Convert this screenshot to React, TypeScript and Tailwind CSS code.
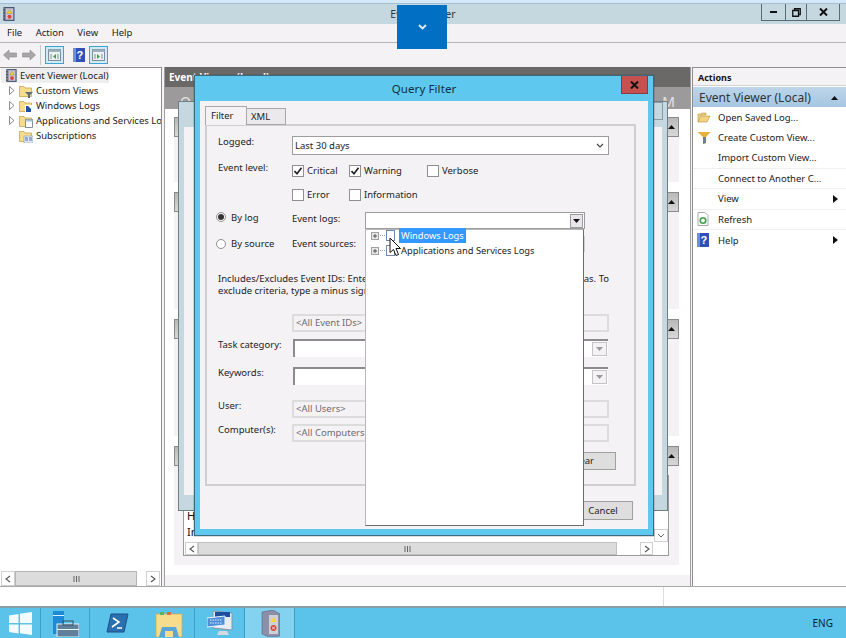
import React from "react";

const EvIcon = ({ s = 14 }: { s?: number }) => (
  <svg width={s} height={s} viewBox="0 0 14 14" className="shrink-0">
    <rect x="2" y="0.5" width="10" height="13" fill="#8a8fa8" stroke="#4d5878" />
    <rect x="4" y="1.5" width="7" height="11" fill="#c9c4cf" />
    <path d="M7.5 2.5 L10 6.5 H5 Z" fill="#f5d33a" stroke="#a08010" strokeWidth="0.4" />
    <circle cx="7.5" cy="9.8" r="2" fill="#d8403a" />
    <path d="M1 3h2M1 6h2M1 9h2M1 12h2" stroke="#333" strokeWidth="0.8" />
  </svg>
);

const Folder = ({ kind }: { kind: "filter" | "logs" | "apps" | "subs" }) => (
  <svg width="14" height="14" viewBox="0 0 14 14" className="shrink-0">
    <path d="M0.5 2.5 H5 L6 4 H12.5 V12.5 H0.5 Z" fill="#f6dc8c" stroke="#c7a650" strokeWidth="0.8" />
    {kind === "filter" && <path d="M6 8h8l-3 3v3h-2v-3z" fill="#5b6d7c" />}
    {kind === "logs" && (
      <>
        <rect x="6" y="6" width="8" height="8" fill="#fff" />
        <path d="M7 7h2l3 3v3H7z" fill="#1f4ea8" />
      </>
    )}
    {kind === "apps" && (
      <>
        <rect x="6.5" y="5.5" width="7" height="8" fill="#fff" stroke="#6c7480" strokeWidth="0.8" />
        <rect x="6.5" y="5.5" width="7" height="2" fill="#a9bfd3" />
      </>
    )}
    {kind === "subs" && (
      <>
        <rect x="5" y="7" width="9" height="7" fill="#e5e9f3" stroke="#8a9ab8" strokeWidth="0.6" />
        <path d="M6 9h3M10 9h3M6 11h3M10 11h3" stroke="#4d6ca8" strokeWidth="1" />
      </>
    )}
  </svg>
);

const TreeArrow = () => (
  <svg width="6" height="9" viewBox="0 0 6 9" className="shrink-0">
    <path d="M0.5 0.5 L5 4.5 L0.5 8.5 Z" fill="#fff" stroke="#6e6e6e" strokeWidth="0.8" />
  </svg>
);

const PaneIcon = ({ right }: { right?: boolean }) => (
  <div className="w-[19px] h-[18px] border border-[#3fa5d0] bg-[#cfeaf8] flex items-center justify-center">
    <svg width="13" height="12" viewBox="0 0 13 12">
      <rect x="0.5" y="0.5" width="12" height="11" fill="#eef1f3" stroke="#7a8d99" />
      <rect x="0.5" y="0.5" width="12" height="2.5" fill="#9fb1bd" />
      <path d={right ? "M5 5 L8 7.5 L5 10 Z" : "M8 5 L5 7.5 L8 10 Z"} fill="#43a047" />
      <path d="M3 5v5M10 5v5" stroke="#7a8d99" />
    </svg>
  </div>
);

const HelpIcon = () => (
  <svg width="12" height="14" viewBox="0 0 12 14" className="shrink-0">
    <rect width="12" height="14" fill="#2f52b8" />
    <rect x="0" y="0" width="3" height="14" fill="#6f8fdc" />
    <text x="6.8" y="11" fontSize="11" fontWeight="700" fill="#fff" textAnchor="middle" fontFamily="Liberation Sans">?</text>
  </svg>
);

const NavArrow = ({ left }: { left?: boolean }) => (
  <svg width="14" height="12" viewBox="0 0 14 12">
    <path d={left ? "M0.5 6 L6 1 V4 H13.5 V8 H6 V11 Z" : "M13.5 6 L8 1 V4 H0.5 V8 H8 V11 Z"} fill="#a7a7a7" stroke="#8a8a8a" strokeWidth="0.6" />
  </svg>
);

const TreeRow = ({ kind, label, arrow = true }: { kind: "filter" | "logs" | "apps" | "subs"; label: string; arrow?: boolean }) => (
  <div className="h-[15px] flex items-center pl-[9px] whitespace-nowrap">
    <div className="w-[10px] shrink-0">{arrow && <TreeArrow />}</div>
    <Folder kind={kind} />
    <span className="ml-[3px]">{label}</span>
  </div>
);

const ScrollBtn = ({ right, w = "w-[14px]" }: { right?: boolean; w?: string }) => (
  <div className={`${w} h-full flex items-center justify-center bg-white border border-[#d0d0d0] shrink-0`}>
    <svg width="6" height="8" viewBox="0 0 6 8">
      <path d={right ? "M1 1l4 3-4 3" : "M5 1L1 4l4 3"} fill="none" stroke="#555" strokeWidth="1.1" />
    </svg>
  </div>
);

const Grip = () => (
  <svg width="7" height="6" viewBox="0 0 7 6">
    <path d="M1 0v6M3.5 0v6M6 0v6" stroke="#666" strokeWidth="1" />
  </svg>
);

const SectionBtn = ({ gap = "mt-[10px]", h }: { gap?: string; h: string }) => (
  <div className={`${gap} ${h} bg-[#f5f2f6] flex flex-col`}>
    <div className="h-[20px] shrink-0 bg-gradient-to-b from-[#b8b8b8] to-[#d8d8d8] border border-[#8a8a8a] flex items-center justify-end pr-[3px]">
      <svg width="7" height="4" viewBox="0 0 7 4"><path d="M3.5 0L7 4H0z" fill="#111" /></svg>
    </div>
  </div>
);

const Check = ({ on }: { on?: boolean }) => (
  <div className="w-[12px] h-[12px] border border-[#8f8f8f] bg-white shrink-0 flex items-center justify-center">
    {on && (
      <svg width="10" height="10" viewBox="0 0 10 10">
        <path d="M1.5 5.2 L4 7.8 L8.5 1.8" fill="none" stroke="#222" strokeWidth="1.7" />
      </svg>
    )}
  </div>
);

const CheckLabel = ({ on, label, w }: { on?: boolean; label: string; w: string }) => (
  <div className={`flex items-center ${w}`}>
    <Check on={on} />
    <span className="ml-[3px]">{label}</span>
  </div>
);

const Radio = ({ on }: { on?: boolean }) => (
  <div className="w-[10px] h-[10px] rounded-full border border-[#8f8f8f] bg-white flex items-center justify-center shrink-0">
    {on && <div className="w-[6px] h-[6px] rounded-full bg-[#333]" />}
  </div>
);

const GrayInput = ({ text, cls }: { text: string; cls: string }) => (
  <div className={`${cls} flex items-center`}>
    <div className="w-[74px] shrink-0" />
    <div className="w-[317px] h-[18px] border-2 border-[#dcdcdc] pl-[2px] flex items-center text-[#6d6d6d] leading-none">{text}</div>
  </div>
);

const LabeledGray = ({ label, text, cls }: { label: string; text: string; cls: string }) => (
  <div className={`${cls} flex items-center`}>
    <div className="w-[74px] shrink-0 mb-[6px]">{label}</div>
    <div className="w-[317px] h-[18px] border-2 border-[#dcdcdc] pl-[2px] flex items-center text-[#6d6d6d] leading-none">{text}</div>
  </div>
);

const DisabledCombo = ({ label, cls }: { label: string; cls: string }) => (
  <div className={`${cls} flex items-start`}>
    <div className="w-[75px] shrink-0 mt-[1px]">{label}</div>
    <div className="w-[315px] h-[18px] bg-white border-t-2 border-l-2 border-[#8b8b8b] flex justify-end items-center pr-[1px]">
      <div className="w-[15px] h-[14px] border border-[#c4c4c4] bg-[#f5f2f6] flex items-center justify-center">
        <svg width="7" height="4" viewBox="0 0 7 4"><path d="M0 0h7L3.5 4z" fill="#9a9a9a" /></svg>
      </div>
    </div>
  </div>
);

const ActionRow = ({ icon, label, arrow, line = true }: { icon?: React.ReactNode; label: string; arrow?: boolean; line?: boolean }) => (
  <div className={`h-[20.5px] flex items-center ${line ? "border-b border-[#f0eef2]" : ""}`}>
    <div className="w-[25px] pl-[4px] flex items-center shrink-0">{icon}</div>
    <span className="whitespace-nowrap">{label}</span>
    {arrow && (
      <svg width="5" height="8" viewBox="0 0 5 8" className="ml-auto mr-[8px]"><path d="M0 0l5 4-5 4z" fill="#111" /></svg>
    )}
  </div>
);

const TaskTile = ({ w, sep = true, active, children }: { w: string; sep?: boolean; active?: boolean; children: React.ReactNode }) => (
  <div className={`${w} h-full flex items-center justify-center ${sep ? "border-r border-[#3a9fc4]" : ""} ${active ? "bg-[#82d2f0]" : ""}`}>{children}</div>
);

const PlusBox = () => (
  <div className="w-[8px] h-[8px] border border-[#a0a0a0] bg-[#e8e8e8] shrink-0 flex items-center justify-center">
    <svg width="6" height="6" viewBox="0 0 6 6"><path d="M3 1v4M1 3h4" stroke="#555" strokeWidth="1" /></svg>
  </div>
);

export default function App() {
  return (
    <div className="relative w-[846px] h-[638px] overflow-hidden bg-[#f5f2f6] font-['Noto_Sans',sans-serif] text-[9.5px] text-[#222] leading-none flex flex-col">
      {/* Title bar */}
      <div className="h-[4px] bg-[#d3e8f8] border-b border-[#a3bdd3] shrink-0" />
      <div className="h-[20px] bg-[#c5d8e0] shrink-0 flex items-center relative">
        <div className="pl-[2px]"><EvIcon s={14} /></div>
        <div className="absolute left-0 right-0 text-center text-[10.5px] text-[#333] tracking-[0.2px]">Event Viewer</div>
        <div className="ml-auto mr-[6px] flex h-[17px] self-start items-center">
          <div className="w-[24px] h-full border-l border-b border-[#5c6a72] flex items-center justify-center">
            <div className="w-[7px] h-[2px] bg-[#111]" />
          </div>
          <div className="w-[21px] h-full border-l border-b border-[#5c6a72] flex items-center justify-center">
            <svg width="9" height="9" viewBox="0 0 9 9"><path d="M2.5 2V.75h5.75v5.75H7M.75 2.5H6.5v5.75H.75z" fill="none" stroke="#111" strokeWidth="1.3" /></svg>
          </div>
          <div className="w-[34px] h-full border-l border-b border-r border-[#5c6a72] flex items-center justify-center">
            <svg width="9" height="8" viewBox="0 0 9 8"><path d="M1 .5l7 7M8 .5l-7 7" stroke="#111" strokeWidth="2" /></svg>
          </div>
        </div>
      </div>

      {/* Menu */}
      <div className="h-[19px] shrink-0 border-b border-[#b4b4b4] flex items-center pl-[7px] gap-[13.5px] text-[9.5px]">
        <span>File</span><span>Action</span><span>View</span><span>Help</span>
      </div>

      {/* Toolbar */}
      <div className="h-[24px] shrink-0 flex items-center pl-[3px]">
        <NavArrow left />
        <div className="w-[5px]" />
        <NavArrow />
        <div className="w-px h-[20px] bg-[#c8c8c8] ml-[4px] mr-[4px]" />
        <PaneIcon />
        <div className="w-[9px]" />
        <HelpIcon />
        <div className="w-[4px]" />
        <PaneIcon right />
      </div>

      {/* Main */}
      <div className="h-[520px] shrink-0 flex border-b border-[#a9a9a9]">
        {/* Left tree */}
        <div className="w-[162px] shrink-0 bg-white border-r border-t border-[#8e8e8e] flex flex-col overflow-hidden">
          <div className="h-[15px] mx-[1px] pl-[4px] flex items-center bg-[#eeeeee] w-[108px] shrink-0">
            <EvIcon s={13} />
            <span className="ml-[2px] whitespace-nowrap">Event Viewer (Local)</span>
          </div>
          <TreeRow kind="filter" label="Custom Views" />
          <TreeRow kind="logs" label="Windows Logs" />
          <TreeRow kind="apps" label="Applications and Services Logs" />
          <TreeRow kind="subs" label="Subscriptions" arrow={false} />
          <div className="mt-auto h-[15px] mx-[1px] flex">
            <ScrollBtn />
            <div className="w-[122px] bg-[#dcdcdc] border border-[#b4b4b4] flex items-center justify-center"><Grip /></div>
            <div className="flex-1 bg-white" />
            <ScrollBtn right />
          </div>
        </div>

        {/* Center */}
        <div className="w-[527px] ml-[2px] shrink-0 border-l border-r border-[#a0a0a0] bg-white flex flex-col overflow-hidden">
          <div className="h-[20px] shrink-0 bg-[#6b6868] text-white font-bold text-[10px] pl-[4px] flex items-center whitespace-nowrap">Event Viewer (Local)</div>
          <div className="h-[22px] shrink-0 bg-[#9d9a9b] text-[#e4e4e4] text-[14px] pl-[15px] pr-[15px] pt-[7px] flex items-center justify-between">
            <span>O</span><span>M</span>
          </div>
          <div className="pl-[9px] pr-[11px] flex flex-col flex-1">
            <SectionBtn gap="mt-[8px]" h="h-[65px]" />
            <SectionBtn h="h-[117px]" />
            <SectionBtn h="h-[117px]" />
            <div className="mt-[10px] h-[119px] bg-[#f5f2f6] flex flex-col">
              <div className="h-[20px] shrink-0 bg-gradient-to-b from-[#b8b8b8] to-[#d8d8d8] border border-[#8a8a8a] flex items-center justify-end pr-[3px]">
                <svg width="7" height="4" viewBox="0 0 7 4"><path d="M3.5 0L7 4H0z" fill="#111" /></svg>
              </div>
              <div className="mt-[9px] ml-[9px] w-[486px] h-[81px] border border-[#9a9a9a] bg-white flex flex-col">
                <div className="flex-1 flex">
                  <div className="flex-1 pl-[3px] pt-[34px] text-[11px] text-[#111] flex flex-col gap-[5px]">
                    <span>H</span><span>In</span>
                  </div>
                  <div className="w-[14px] flex flex-col justify-end">
                    <div className="h-[13px] border border-[#d0d0d0] flex items-center justify-center">
                      <svg width="8" height="5" viewBox="0 0 8 5"><path d="M1 1l3 3 3-3" fill="none" stroke="#666" /></svg>
                    </div>
                  </div>
                </div>
                <div className="h-[13px] flex mr-[15px] ml-[1px]">
                  <ScrollBtn w="w-[13px]" />
                  <div className="w-[419px] bg-[#dcdcdc] border border-[#c0c0c0] flex items-center justify-center"><Grip /></div>
                  <div className="flex-1 bg-white" />
                  <ScrollBtn right w="w-[13px]" />
                </div>
              </div>
            </div>
            <div className="mt-[10px] flex-1 bg-[#f5f2f6] -ml-[9px] -mr-[11px]" />
          </div>
        </div>

        {/* Right */}
        <div className="ml-[1px] flex-1 border-l border-t border-[#8e8e8e] bg-white flex flex-col overflow-hidden">
          <div className="h-[18px] shrink-0 bg-[#f5f2f6] border-b border-[#d4d4d4] pl-[5px] pt-[1px] flex items-center font-bold text-[9px] text-[#111]">Actions</div>
          <div className="h-[20px] mt-px shrink-0 bg-gradient-to-b from-[#bdd5ea] to-[#a6c6e2] pl-[6px] pr-[8px] pt-[2px] flex items-center justify-between text-[12px] text-[#333]">
            <span className="whitespace-nowrap">Event Viewer (Local)</span>
            <svg width="7" height="4" viewBox="0 0 7 4"><path d="M3.5 0L7 4H0z" fill="#111" /></svg>
          </div>
          <div className="flex flex-col">
            <ActionRow label="Open Saved Log..." line={false} icon={
              <svg width="14" height="12" viewBox="0 0 14 12"><path d="M1 11V3h3l1-1h4v2H4L1 11h9l3-6H4" fill="#f3d27f" stroke="#b8923c" strokeWidth="0.6" /></svg>
            } />
            <ActionRow label="Create Custom View..." line={false} icon={
              <svg width="14" height="13" viewBox="0 0 14 13"><path d="M0.5 1h13L9 6v6l-3 1V6z" fill="#e8b23a" /><path d="M6 6h3v6l-3 1z" fill="#6d7f90" /></svg>
            } />
            <ActionRow label="Import Custom View..." />
            <ActionRow label="Connect to Another C..." />
            <ActionRow label="View" arrow />
            <ActionRow label="Refresh" icon={
              <svg width="12" height="14" viewBox="0 0 12 14"><path d="M1 .5h7l3 3v10H1z" fill="#fff" stroke="#a8a8a8" /><circle cx="6" cy="8.5" r="2.8" fill="none" stroke="#3ea04a" strokeWidth="1.6" /></svg>
            } />
            <ActionRow label="Help" arrow line={false} icon={<HelpIcon />} />
          </div>
        </div>
      </div>

      {/* Status bar */}
      <div className="h-[19px] shrink-0 bg-white flex justify-end">
        <div className="w-[183px] border-l border-[#dcdcdc]" />
      </div>

      {/* Taskbar */}
      <div className="flex-1 bg-[#5bc3e9] border-t-2 border-[#8b9da6] flex items-center">
        <TaskTile w="w-[41px]">
          <svg width="23" height="23" viewBox="0 0 23 23"><path d="M0 3.5 L9.5 2 V11 H0 Z M11 1.8 L23 0 V11 H11 Z M0 12.5 H9.5 V21.5 L0 20 Z M11 12.5 H23 V23 L11 21.2 Z" fill="#f4fbff" /></svg>
        </TaskTile>
        <TaskTile w="w-[49px]">
          <svg width="27" height="27" viewBox="0 0 27 27"><rect x="1" y="1" width="11" height="23" fill="#1d8ad6" /><rect x="1" y="5" width="11" height="1" fill="#d9f1ff" /><rect x="5" y="14" width="22" height="13" fill="#5f7f9b" stroke="#e8f6ff" /><rect x="11" y="11" width="10" height="4" fill="none" stroke="#3d4f60" /><rect x="5" y="19" width="22" height="1" fill="#e8f6ff" /></svg>
        </TaskTile>
        <TaskTile w="w-[54px]" sep={false}>
          <svg width="23" height="20" viewBox="0 0 23 20"><path d="M5 1 H22 L18 19 H1 Z" fill="#2a6fb0" stroke="#1d4f86" /><path d="M7 5 L13 9 L6 14 M11 15h5" fill="none" stroke="#fff" strokeWidth="1.6" /></svg>
        </TaskTile>
        <TaskTile w="w-[51px]">
          <svg width="27" height="27" viewBox="0 0 27 27"><path d="M0 4 H26 V27 H0 Z" fill="#f6dc8c" stroke="#c8a65a" strokeWidth="0.7" /><rect x="4" y="2" width="4" height="3" fill="#5fb060" /><rect x="11" y="2" width="4" height="3" fill="#d9703c" /><path d="M6 17 H20 L23 27 H3 Z" fill="#5aa6d8" /><rect x="9" y="21" width="8" height="6" fill="#f6dc8c" /></svg>
        </TaskTile>
        <TaskTile w="w-[50px]">
          <svg width="26" height="27" viewBox="0 0 26 27"><path d="M6 1 L25 3 V20 L6 18 Z" fill="#e8edf3" stroke="#8894a3" /><rect x="8" y="2" width="15" height="5" fill="#1d4e9e" /><path d="M0 8 L18 6 V15 L0 17 Z" fill="#4f8ed6" stroke="#e8f4ff" /><path d="M3 10h12M3 13h12" stroke="#dfefff" strokeDasharray="1.5 1" /><path d="M12 21 H20 L22 25 H10 Z" fill="#d5d9de" /></svg>
        </TaskTile>
        <TaskTile w="w-[50px]" active>
          <svg width="20" height="27" viewBox="0 0 20 27"><path d="M2 2 L13 0 L20 4 V26 L9 27 L2 24 Z" fill="#8b90a8" stroke="#5d6785" strokeWidth="0.6" /><path d="M9 5 H18 V24 H9 Z" fill="#cfd0d8" /><path d="M13.5 7 L16.5 12 H10.5 Z" fill="#f5d33a" /><circle cx="13.5" cy="18" r="3" fill="#d8403a" /><path d="M11.8 16.5l3.4 3M15.2 16.5l-3.4 3" stroke="#fff" strokeWidth="0.7" /></svg>
        </TaskTile>
        <span className="ml-auto mr-[13px] text-[10px] text-[#123]">ENG</span>
      </div>

      {/* Blue overlay tab */}
      <div className="absolute left-[397px] top-[5px] w-[50px] h-[44px] bg-[#0170c4] flex items-center justify-center">
        <svg width="9" height="6" viewBox="0 0 9 6"><path d="M1 1l3.5 3.5L8 1" fill="none" stroke="#dff0fb" strokeWidth="1.8" /></svg>
      </div>

      {/* Background dialog */}
      <div className="absolute left-[178px] top-[101px] w-[490px] h-[410px] bg-[#c5d8e0] border border-[#6f7d84] pt-[25px] px-[5px] pb-[15px]">
        <div className="absolute right-[4px] top-0 w-[24px] h-[18px] border border-[#8a9ba3]" />
        <div className="w-full h-full bg-[#f5f2f6]" />
      </div>

      {/* Query Filter dialog */}
      <div className="absolute left-[194px] top-[75px] w-[460px] h-[461px] bg-[#5ec8ef] border border-[#3a6b80] shadow-[0_0_1px_#333] flex flex-col">
        <div className="h-[25px] shrink-0 relative flex items-center justify-center text-[11.5px] text-[#123040] tracking-[0.1px]">
          Query Filter
          <div className="absolute right-[5px] top-0 w-[27px] h-[18px] bg-[#c75050] border border-[#8d3a3a] border-t-0 flex items-center justify-center">
            <svg width="9" height="8" viewBox="0 0 9 8"><path d="M1 .5l7 7M8 .5l-7 7" stroke="#111" strokeWidth="2" /></svg>
          </div>
        </div>
        <div className="mx-[5px] mb-[6px] flex-1 bg-[#f5f2f6] px-[5px] pt-[5px] flex flex-col relative">
          {/* Tabs */}
          <div className="flex items-end h-[19px] relative z-10 shrink-0">
            <div className="w-[42px] h-[19px] bg-[#f5f2f6] border border-b-0 border-[#a8a8a8] flex items-center pl-[5px]">Filter</div>
            <div className="w-[39px] h-[17px] bg-[#ebe9ec] border border-l-0 border-[#a8a8a8] flex items-center pl-[4px]">XML</div>
          </div>
          {/* Panel */}
          <div className="w-[431px] h-[362px] -mt-px border-2 border-[#cfcfcf] pl-[11px] flex flex-col">
            <div className="mt-[10px] h-[19px] flex items-start shrink-0">
              <div className="w-[74px] shrink-0 mt-[1px]">Logged:</div>
              <div className="w-[317px] h-[19px] bg-white border border-[#9d9d9d] pl-[2px] pr-[4px] flex items-center justify-between">
                <span>Last 30 days</span>
                <svg width="8" height="5" viewBox="0 0 8 5"><path d="M1 1l3 3 3-3" fill="none" stroke="#444" strokeWidth="1.2" /></svg>
              </div>
            </div>
            <div className="mt-[10px] h-[16px] flex items-start shrink-0">
              <div className="w-[74px] shrink-0 -mt-[2px]">Event level:</div>
              <CheckLabel on label="Critical" w="w-[57px]" />
              <CheckLabel on label="Warning" w="w-[78px]" />
              <CheckLabel label="Verbose" w="w-[70px]" />
            </div>
            <div className="mt-[8px] h-[16px] flex items-start shrink-0">
              <div className="w-[74px] shrink-0" />
              <CheckLabel label="Error" w="w-[57px]" />
              <CheckLabel label="Information" w="w-[78px]" />
            </div>
            <div className="mt-[7px] h-[17px] flex items-start shrink-0 -ml-[2px]">
              <Radio on />
              <span className="ml-[5px] w-[61px] mt-[1px]">By log</span>
              <span className="w-[73px] mt-[2px]">Event logs:</span>
              <div className="w-[220px] h-[17px] bg-white border border-[#9d9d9d] flex justify-end items-center pr-px">
                <div className="w-[13px] h-[14px] bg-[#e8e6ea] border border-[#9d9d9d] flex items-center justify-center">
                  <svg width="7" height="4" viewBox="0 0 7 4"><path d="M0 0h7L3.5 4z" fill="#111" /></svg>
                </div>
              </div>
            </div>
            <div className="mt-[7px] h-[16px] flex items-center shrink-0 -ml-[2px]">
              <Radio />
              <span className="ml-[5px] w-[61px]">By source</span>
              <span className="w-[73px]">Event sources:</span>
              <div className="w-[220px] h-[16px] bg-[#ececec] border border-[#d0d0d0]" />
            </div>
            <div className="mt-[21px] h-[24px] shrink-0 w-[391px] leading-[12px] flex flex-col whitespace-nowrap">
              <div className="flex">
                <span className="w-[190px] shrink-0">Includes/Excludes Event IDs: Enter ID numbers</span>
                <span className="ml-auto">and/or ID ranges separated by commas. To</span>
              </div>
              <div>exclude criteria, type a minus sign first. For example 1,3,5-99,-76</div>
            </div>
            <GrayInput text="<All Event IDs>" cls="mt-[17px] h-[18px] shrink-0" />
            <DisabledCombo label="Task category:" cls="mt-[7px] h-[18px] shrink-0" />
            <DisabledCombo label="Keywords:" cls="mt-[10px] h-[18px] shrink-0" />
            <LabeledGray label="User:" text="<All Users>" cls="mt-[15px] h-[18px] shrink-0" />
            <LabeledGray label="Computer(s):" text="<All Computers>" cls="mt-[6px] h-[18px] shrink-0" />
            <div className="mt-[10px] h-[18px] shrink-0 w-[398px] flex justify-end">
              <div className="w-[80px] h-[18px] bg-[#dedede] border border-[#a0a0a0] flex items-center justify-center pl-[13px]">Clear</div>
            </div>
          </div>
          {/* Buttons */}
          <div className="mt-[15px] h-[19px] flex justify-end pr-[3px] w-[431px]">
            <div className="w-[60px] h-[19px] bg-[#dedede] border border-[#a0a0a0] flex items-center justify-center">Cancel</div>
          </div>

          {/* Dropdown popup */}
          <div className="absolute left-[165px] top-[128px] w-[219px] h-[297px] bg-white border border-[#b8b8b8] border-r-[#6d6d6d] border-b-[#6d6d6d] z-20 pl-[5px] text-[9.3px]">
            <div className="h-[15px] -mt-[2px] flex items-center">
              <PlusBox />
              <div className="w-[5px] border-t border-dotted border-[#999] mx-px" />
              <div className="w-[9px] h-[11px] border border-[#6f8aa8] bg-white shrink-0" />
              <span className="ml-[4px] h-[15px] px-[2px] bg-[#3399ff] text-white flex items-center whitespace-nowrap">Windows Logs</span>
            </div>
            <div className="h-[15px] flex items-center">
              <PlusBox />
              <div className="w-[5px] border-t border-dotted border-[#999] mx-px" />
              <div className="w-[9px] h-[11px] border border-[#6f8aa8] bg-white shrink-0" />
              <span className="ml-[6px] whitespace-nowrap">Applications and Services Logs</span>
            </div>
            {/* cursor */}
            <svg width="13" height="20" viewBox="0 0 13 20" className="absolute left-[23px] top-[7px]">
              <path d="M1 1 V15.5 L4.5 12.5 L7 18.5 L9.5 17.5 L7 11.5 H11.5 Z" fill="#fff" stroke="#111" strokeWidth="1" />
            </svg>
          </div>
        </div>
      </div>
    </div>
  );
}
